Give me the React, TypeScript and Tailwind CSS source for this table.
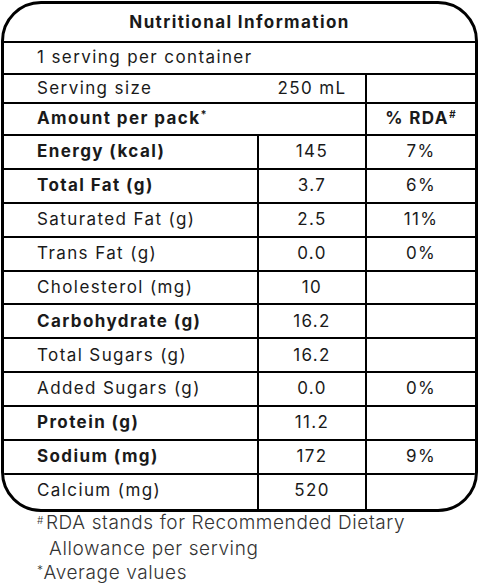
import React from "react";

type Row = { label: string; value: string; rda: string; bold?: boolean };

const rows: Row[] = [
  { label: "Energy (kcal)", value: "145", rda: "7%", bold: true },
  { label: "Total Fat (g)", value: "3.7", rda: "6%", bold: true },
  { label: "Saturated Fat (g)", value: "2.5", rda: "11%" },
  { label: "Trans Fat (g)", value: "0.0", rda: "0%" },
  { label: "Cholesterol (mg)", value: "10", rda: "" },
  { label: "Carbohydrate (g)", value: "16.2", rda: "", bold: true },
  { label: "Total Sugars (g)", value: "16.2", rda: "" },
  { label: "Added Sugars (g)", value: "0.0", rda: "0%" },
  { label: "Protein (g)", value: "11.2", rda: "", bold: true },
  { label: "Sodium (mg)", value: "172", rda: "9%", bold: true },
];

export default function App() {
  return (
    <div
      className="w-[480px] h-[583px] bg-white text-[#1a1a1a] overflow-hidden"
      style={{ fontFamily: "Inter, 'Noto Sans', sans-serif" }}
    >
      <div className="ml-[1px] mt-[1px] w-[477px] border-[3px] border-black rounded-[40px] overflow-hidden">
        <div className="h-[39px] border-b-2 border-black flex items-center justify-center font-bold text-[17px] tracking-[1.4px]">
          Nutritional Information
        </div>
        <div className="h-[32px] border-b-2 border-black flex items-center pl-[33px] text-[17px] tracking-[1.4px]">
          1 serving per container
        </div>
        <div className="h-[29px] border-b-2 border-black flex text-[17px] tracking-[1.4px]">
          <div className="w-[363px] border-r-2 border-black flex items-center">
            <span className="pl-[33px] w-[255px]">Serving size</span>
            <span className="w-[106px] text-center">250 mL</span>
          </div>
          <div className="flex-1" />
        </div>
        <div className="h-[32px] border-b-2 border-black flex text-[17px] font-bold tracking-[1.4px]">
          <div className="w-[363px] border-r-2 border-black flex items-center pl-[33px]">
            Amount per pack<span className="text-[11px] relative -top-[5px]">*</span>
          </div>
          <div className="flex-1 flex items-center justify-center">
            % RDA<span className="text-[10px] italic relative -top-[5px]">#</span>
          </div>
        </div>
        {rows.map((r) => (
          <div
            key={r.label}
            className="h-[33.9px] border-b-2 border-black flex text-[17px] tracking-[1.4px]"
          >
            <div
              className={`w-[255px] border-r-2 border-black flex items-center pl-[33px] ${
                r.bold ? "font-bold" : ""
              }`}
            >
              {r.label}
            </div>
            <div className="w-[108px] border-r-2 border-black flex items-center justify-center">
              {r.value}
            </div>
            <div className="flex-1 flex items-center justify-center">{r.rda}</div>
          </div>
        ))}
        <div className="h-[34px] flex text-[17px] tracking-[1.4px]">
          <div className="w-[255px] border-r-2 border-black flex items-center pl-[33px] pb-[2px]">
            Calcium (mg)
          </div>
          <div className="w-[108px] border-r-2 border-black flex items-center justify-center pb-[2px]">
            520
          </div>
          <div className="flex-1" />
        </div>
      </div>
      <div className="pl-[37px] text-[19px] leading-[24px] text-[#333] font-light tracking-[0.6px] mt-[-1px]">
        <div>
          <span className="text-[10px] relative -top-[5px] mr-[2px]">#</span>
          RDA stands for Recommended Dietary
        </div>
        <div className="pl-[12px]">Allowance per serving</div>
        <div>
          <span className="text-[12px] relative -top-[5px]">*</span>Average values
        </div>
      </div>
    </div>
  );
}
